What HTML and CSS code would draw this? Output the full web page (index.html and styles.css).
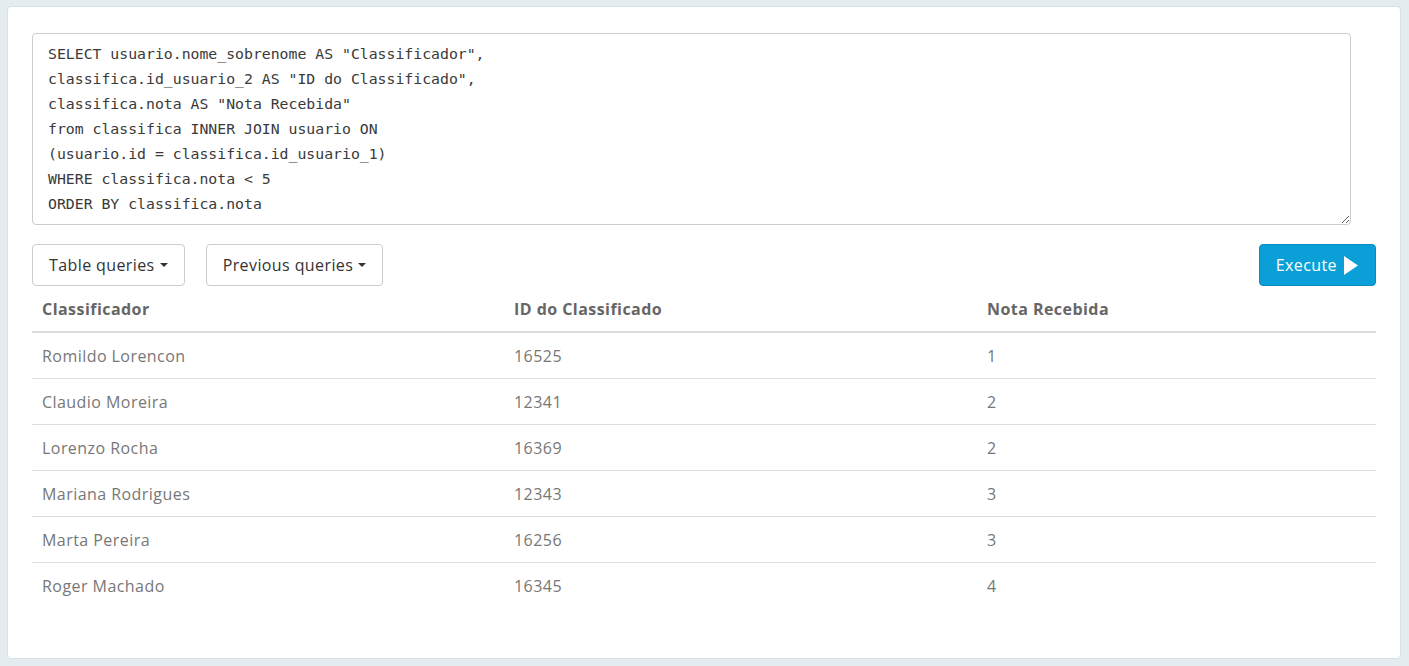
FILE: index.html
```html
<!DOCTYPE html>
<html lang="pt">
<head>
<meta charset="utf-8">
<title>SQL Query</title>
<link rel="stylesheet" href="styles.css">
</head>
<body>
<div class="card">
  <textarea class="sql" rows="7" spellcheck="false">SELECT usuario.nome_sobrenome AS "Classificador",
classifica.id_usuario_2 AS "ID do Classificado",
classifica.nota AS "Nota Recebida"
from classifica INNER JOIN usuario ON
(usuario.id = classifica.id_usuario_1)
WHERE classifica.nota &lt; 5
ORDER BY classifica.nota</textarea>
  <div class="toolbar">
    <div class="left-btns">
      <button class="btn btn-default">Table queries<span class="caret"></span></button>
      <button class="btn btn-default">Previous queries<span class="caret"></span></button>
    </div>
    <button class="btn btn-primary">Execute<svg class="play" width="14" height="19" viewBox="0 0 14 19"><path d="M0 0 L14 9.5 L0 19 Z" fill="#fff"/></svg></button>
  </div>
  <table class="results">
    <thead>
      <tr><th class="c1">Classificador</th><th class="c2">ID do Classificado</th><th>Nota Recebida</th></tr>
    </thead>
    <tbody>
      <tr><td>Romildo Lorencon</td><td>16525</td><td>1</td></tr>
      <tr><td>Claudio Moreira</td><td>12341</td><td>2</td></tr>
      <tr><td>Lorenzo Rocha</td><td>16369</td><td>2</td></tr>
      <tr><td>Mariana Rodrigues</td><td>12343</td><td>3</td></tr>
      <tr><td>Marta Pereira</td><td>16256</td><td>3</td></tr>
      <tr><td>Roger Machado</td><td>16345</td><td>4</td></tr>
    </tbody>
  </table>
</div>
</body>
</html>
```
FILE: styles.css
```css
* { box-sizing: border-box; }
html, body { margin: 0; padding: 0; }
body {
  background: #e4ecf0;
  font-family: "Open Sans", "Noto Sans", sans-serif;
  font-size: 16px;
  letter-spacing: 0.45px;
  color: #777;
  padding: 6px 8px 7px 7px;
}
.card {
  background: #fff;
  border: 1px solid #d6e0e6;
  border-radius: 4px;
  padding: 26px 24px 50px 24px;
  height: 653px;
}
.sql {
  display: block;
  width: calc(100% - 25px);
  height: 192px;
  margin: 0;
  padding: 7px 14px 7px 15px;
  border: 1px solid #ccc;
  border-radius: 4px;
  font-family: "DejaVu Sans Mono", "Liberation Mono", monospace;
  font-size: 14.8px;
  letter-spacing: 0;
  line-height: 25px;
  color: #3a3a3a;
  resize: vertical;
  outline: none;
}
.toolbar {
  display: flex;
  justify-content: space-between;
  align-items: center;
  margin-top: 19px;
}
.left-btns { display: flex; gap: 21px; }
.btn {
  height: 42px;
  padding: 0 16px 0 16px;
  border-radius: 4px;
  font-family: inherit;
  font-size: 16px;
  letter-spacing: 0.4px;
  display: inline-flex;
  align-items: center;
  cursor: pointer;
}
.btn-default {
  background: #fff;
  border: 1px solid #ccc;
  color: #333;
}
.btn-primary {
  background: #0b9fd8;
  border: 1px solid #0a8ac0;
  color: #fff;
  padding: 0 17px 0 16px;
}
.play { margin-left: 7px; }
.caret {
  display: inline-block;
  width: 0;
  height: 0;
  margin-left: 5px;
  border-top: 4px solid #333;
  border-left: 4px solid transparent;
  border-right: 4px solid transparent;
}
.results {
  width: 100%;
  border-collapse: collapse;
  border-spacing: 0;
}
.results th, .results td {
  text-align: left;
  line-height: 21px;
}
.results th {
  font-weight: 700;
  color: #666;
  padding: 13px 10px 11px;
  border-bottom: 2px solid #ddd;
}
.results td { border-top: 1px solid #ddd; padding: 13px 10px 11px; }
.results tbody tr:first-child td { border-top: 0; }
.results .c1 { width: 472px; }
.results .c2 { width: 473px; }
```
